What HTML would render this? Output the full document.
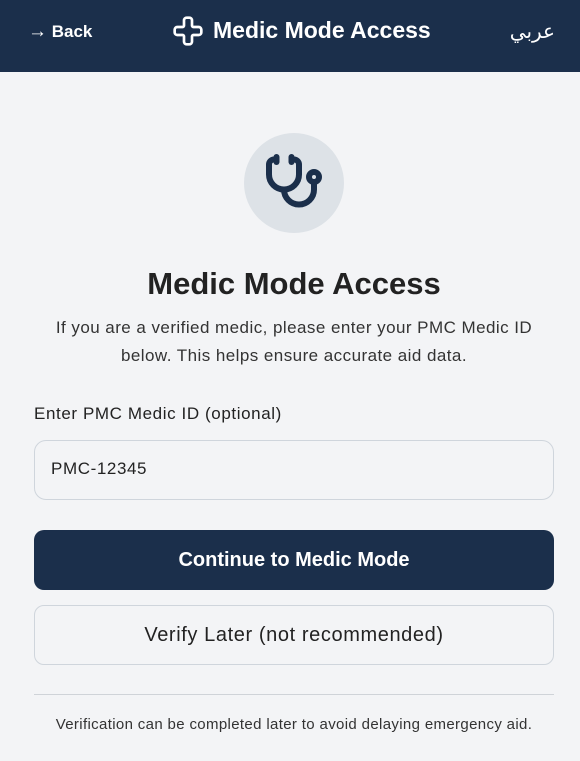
<!DOCTYPE html>
<html><head><meta charset="utf-8"><style>
*{box-sizing:border-box;margin:0;padding:0}
body{width:580px;height:761px;background:#f3f4f6;font-family:"Liberation Sans","DejaVu Sans",sans-serif;color:#1f2937;position:relative;overflow:hidden}
.hdr{position:absolute;left:0;top:0;width:580px;height:72px;background:#1b2f4b;color:#fff}
.back{position:absolute;left:28px;top:21px;font-size:17px;font-weight:bold}
.back span{font-size:19px;font-weight:normal}
.title{position:absolute;left:213px;top:17px;font-size:23px;font-weight:bold}
.ar{position:absolute;right:25px;top:19px;font-size:20px;font-family:"DejaVu Sans",sans-serif}
.circ{position:absolute;left:244px;top:133px;width:100px;height:100px;border-radius:50%;background:#dde2e7}
h1{position:absolute;left:0;width:588px;text-align:center;top:266px;font-size:31px;font-weight:bold;color:#222}
.p{position:absolute;left:0;width:588px;text-align:center;top:314px;font-size:17px;letter-spacing:.45px;line-height:28px;color:#333}
.lbl{position:absolute;left:34px;top:404px;font-size:17px;letter-spacing:.6px;color:#222}
.inp{position:absolute;left:34px;top:440px;width:520px;height:60px;border:1px solid #cfd5dc;border-radius:12px;font-size:17px;letter-spacing:.6px;padding:18px 0 0 16px;color:#222}
.b1{position:absolute;left:34px;top:530px;width:520px;height:60px;border-radius:10px;background:#1b2f4b;color:#fff;font-size:20px;font-weight:bold;text-align:center;line-height:60px}
.b2{position:absolute;left:34px;top:605px;width:520px;height:60px;border-radius:10px;border:1px solid #cfd5dc;color:#222;font-size:20px;letter-spacing:.6px;text-align:center;line-height:58px}
.hr{position:absolute;left:34px;top:694px;width:520px;height:1px;background:#cfd3d8}
.ft{position:absolute;left:0;width:588px;text-align:center;top:716px;font-size:15px;letter-spacing:.35px;color:#333}
</style></head><body>
<div class="hdr">
<div class="back"><span>→</span> Back</div>
<svg style="position:absolute;left:172px;top:15px" width="32" height="32" viewBox="0 0 24 24" fill="none" stroke="#fff" stroke-width="2" stroke-linecap="round" stroke-linejoin="round"><path d="M4 9a2 2 0 0 0-2 2v2a2 2 0 0 0 2 2h4a1 1 0 0 1 1 1v4a2 2 0 0 0 2 2h2a2 2 0 0 0 2-2v-4a1 1 0 0 1 1-1h4a2 2 0 0 0 2-2v-2a2 2 0 0 0-2-2h-4a1 1 0 0 1-1-1V4a2 2 0 0 0-2-2h-2a2 2 0 0 0-2 2v4a1 1 0 0 1-1 1z"/></svg>
<div class="title">Medic Mode Access</div>
<div class="ar">عربي</div>
</div>
<div class="circ"></div>
<svg style="position:absolute;left:264px;top:152px" width="60" height="60" viewBox="0 0 24 24" fill="none" stroke="#1b2f4b" stroke-width="2.4" stroke-linecap="round" stroke-linejoin="round"><path d="M11 2v2"/><path d="M5 2v2"/><path d="M5 3H4a2 2 0 0 0-2 2v4a6 6 0 0 0 12 0V5a2 2 0 0 0-2-2h-1"/><path d="M8 15a6 6 0 0 0 12 0v-3"/><circle cx="20" cy="10" r="2"/></svg>
<h1>Medic Mode Access</h1>
<div class="p">If you are a verified medic, please enter your PMC Medic ID<br>below. This helps ensure accurate aid data.</div>
<div class="lbl">Enter PMC Medic ID (optional)</div>
<div class="inp">PMC-12345</div>
<div class="b1">Continue to Medic Mode</div>
<div class="b2">Verify Later (not recommended)</div>
<div class="hr"></div>
<div class="ft">Verification can be completed later to avoid delaying emergency aid.</div>
</body></html>
